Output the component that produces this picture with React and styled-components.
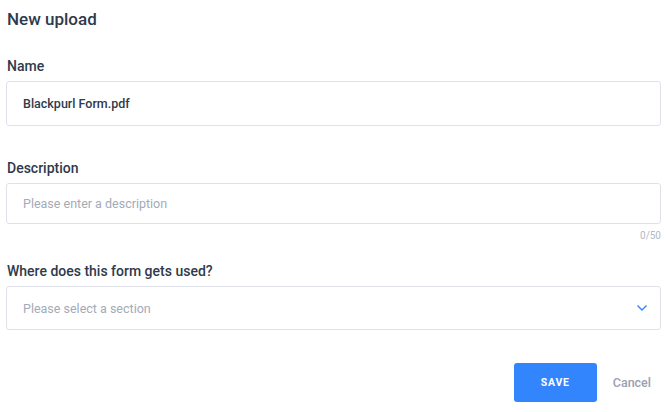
import React, { useState } from "react";
import styled, { createGlobalStyle } from "styled-components";

const GlobalStyle = createGlobalStyle`
  body {
    margin: 0;
    background: #ffffff;
    font-family: Roboto, "Liberation Sans", sans-serif;
  }
`;

const Page = styled.div`
  padding: 9px 7px 10px 6px;
  color: #2e3a4d;
`;

const Title = styled.div`
  font-size: 17px;
  font-weight: 500;
  margin-left: 1px;
  line-height: 20px;
`;

const Field = styled.div`
  margin-top: ${(p) => p.gap}px;
`;

const Label = styled.div`
  font-size: 14px;
  font-weight: 500;
  line-height: 18px;
  margin: 0 0 6px 1px;
`;

const InputBox = styled.input`
  box-sizing: border-box;
  width: 100%;
  height: ${(p) => p.h}px;
  border: 1px solid #dfe2ea;
  border-radius: 3px;
  padding: 0 16px;
  font-family: Roboto, "Liberation Sans", sans-serif;
  font-size: 12.5px;
  font-weight: 500;
  color: #2e3a4d;
  outline: none;
  &::placeholder {
    color: #a3aab8;
    font-weight: 400;
  }
`;

const Counter = styled.div`
  text-align: right;
  font-size: 10px;
  color: #b3b9c6;
  margin-top: 6px;
  line-height: 12px;
`;

const SelectBox = styled.div`
  box-sizing: border-box;
  height: 44px;
  border: 1px solid #dfe2ea;
  border-radius: 3px;
  padding: 0 12px 0 16px;
  display: flex;
  align-items: center;
  justify-content: space-between;
  font-size: 12.5px;
  color: #a3aab8;
`;

const Actions = styled.div`
  display: flex;
  justify-content: flex-end;
  align-items: center;
  margin-top: 33px;
  gap: 16px;
  padding-right: 10px;
`;

const SaveButton = styled.button`
  width: 83px;
  height: 39px;
  border: none;
  border-radius: 3px;
  background: #3385fe;
  color: #ffffff;
  font-family: Roboto, "Liberation Sans", sans-serif;
  font-weight: 700;
  font-size: 10.5px;
  letter-spacing: 0.8px;
`;

const CancelButton = styled.button`
  border: none;
  background: none;
  padding: 0;
  color: #9aa1b0;
  font-family: Roboto, "Liberation Sans", sans-serif;
  font-size: 12.5px;
  font-weight: 500;
`;

function Chevron() {
  return (
    <svg width="12" height="8" viewBox="0 0 12 8" fill="none">
      <path d="M1.5 1.5 L6 6 L10.5 1.5" stroke="#3385fe" strokeWidth="1.4" />
    </svg>
  );
}

export default function App() {
  const [name, setName] = useState("Blackpurl Form.pdf");
  const [desc, setDesc] = useState("");

  return (
    <>
      <GlobalStyle />
      <Page>
        <Title>New upload</Title>
        <Field gap={28}>
          <Label>Name</Label>
          <InputBox h={45} value={name} onChange={(e) => setName(e.target.value)} />
        </Field>
        <Field gap={33}>
          <Label>Description</Label>
          <InputBox
            h={41}
            placeholder="Please enter a description"
            maxLength={50}
            value={desc}
            onChange={(e) => setDesc(e.target.value)}
          />
          <Counter>{desc.length}/50</Counter>
        </Field>
        <Field gap={20}>
          <Label>Where does this form gets used?</Label>
          <SelectBox>
            <span>Please select a section</span>
            <Chevron />
          </SelectBox>
        </Field>
        <Actions>
          <SaveButton>SAVE</SaveButton>
          <CancelButton>Cancel</CancelButton>
        </Actions>
      </Page>
    </>
  );
}
